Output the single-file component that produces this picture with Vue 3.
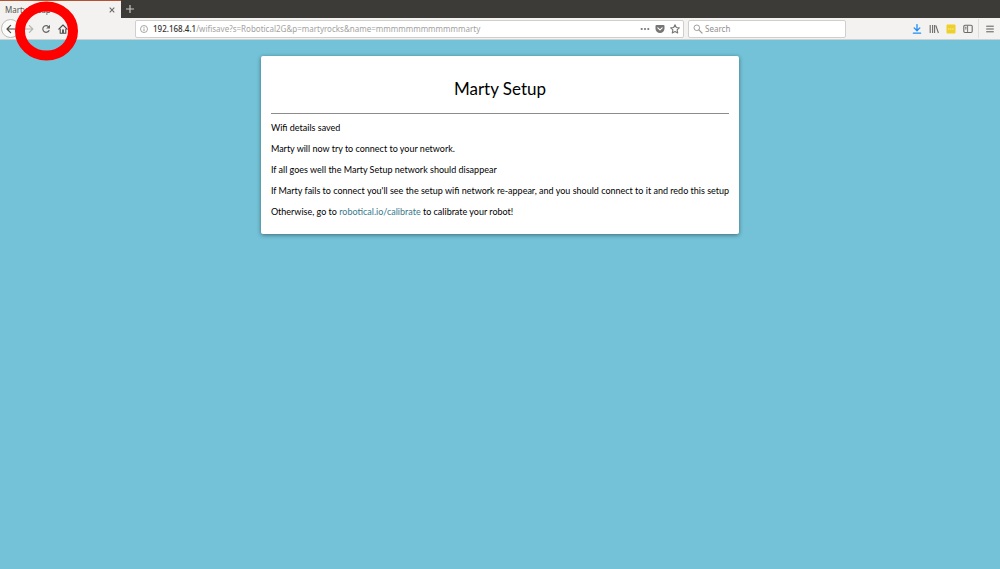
<script setup>
import { ref } from 'vue'

const query = ref('')
const paragraphs = [
  'Wifi details saved',
  'Marty will now try to connect to your network.',
  'If all goes well the Marty Setup network should disappear',
  "If Marty fails to connect you'll see the setup wifi network re-appear, and you should connect to it and redo this setup",
]
</script>

<template>
  <div class="window">
    <header class="chrome">
      <div class="tabs">
        <div class="tab">
          <span class="tab-title">Marty Setup</span>
          <button class="tab-close" aria-label="Close tab">
            <svg width="6" height="6" viewBox="0 0 6 6"><path d="M.7.7l4.6 4.6M5.3.7L.7 5.3" stroke="#6b6966" stroke-width="1.1" /></svg>
          </button>
        </div>
        <button class="new-tab" aria-label="New tab">
          <svg width="8" height="8" viewBox="0 0 8 8"><path d="M4 0v8M0 4h8" stroke="#c9c8c4" stroke-width="1.2" /></svg>
        </button>
      </div>

      <div class="toolbar">
        <nav class="nav">
          <button class="back" aria-label="Back">
            <svg width="10" height="10" viewBox="0 0 10 10"><path d="M9.3 5H1.2M4.6 1.4L1 5l3.6 3.6" fill="none" stroke="#4c4b49" stroke-width="1.2" stroke-linecap="round" stroke-linejoin="round" /></svg>
          </button>
          <button aria-label="Forward">
            <svg width="10" height="10" viewBox="0 0 10 10"><path d="M1 5h7.6M5.4 1.6L8.8 5 5.4 8.4" fill="none" stroke="#b5b4b2" stroke-width="1.2" stroke-linecap="round" stroke-linejoin="round" /></svg>
          </button>
          <button aria-label="Reload">
            <svg width="10" height="10" viewBox="0 0 10 10"><path d="M7.4 2.6A3.3 3.3 0 1 0 8 6.6" fill="none" stroke="#666562" stroke-width="1.2" stroke-linecap="round" /><path d="M9 .8v3.8H5.2z" fill="#666562" /></svg>
          </button>
          <button aria-label="Home">
            <svg width="10" height="10" viewBox="0 0 10 10"><path d="M.8 5.2L5 1l4.2 4.2M2.2 5v4.2h5.6V5" fill="none" stroke="#4c4b49" stroke-width="1.1" stroke-linecap="round" stroke-linejoin="round" /><path d="M4.1 9V5.6h1.8V9z" fill="#4c4b49" /></svg>
          </button>
        </nav>

        <div class="address">
          <svg width="8" height="8" viewBox="0 0 8 8"><circle cx="4" cy="4" r="3.5" fill="none" stroke="#91908e" stroke-width=".8" /><path d="M4 3.5V6M4 1.9v.9" stroke="#91908e" stroke-width=".9" /></svg>
          <span class="url"><b>192.168.4.1</b>/wifisave?s=Robotical2G&amp;p=martyrocks&amp;name=mmmmmmmmmmmmarty</span>
          <button aria-label="Page actions">
            <svg width="10" height="10" viewBox="0 0 10 10" fill="#777674"><circle cx="1.7" cy="5" r="1.1" /><circle cx="5" cy="5" r="1.1" /><circle cx="8.3" cy="5" r="1.1" /></svg>
          </button>
          <button aria-label="Save to Pocket">
            <svg width="10" height="10" viewBox="0 0 10 10"><path d="M1.4 1h7.2q.9 0 .9.9v2.6a4.5 4.5 0 0 1-9 0V1.9q0-.9.9-.9z" fill="#777674" /><path d="M2.8 3.9L5 5.9l2.2-2" fill="none" stroke="#fff" stroke-width="1.1" stroke-linecap="round" stroke-linejoin="round" /></svg>
          </button>
          <button aria-label="Bookmark">
            <svg width="10" height="10" viewBox="0 0 10 10"><path d="M5 .8l1.3 2.7 3 .4-2.2 2 .6 3L5 7.5 2.3 8.9l.6-3-2.2-2 3-.4z" fill="none" stroke="#777674" stroke-width="1.1" stroke-linejoin="round" /></svg>
          </button>
        </div>

        <label class="search">
          <svg width="10" height="10" viewBox="0 0 10 10"><circle cx="3.8" cy="3.8" r="2.8" fill="none" stroke="#a09f9d" stroke-width="1" /><path d="M5.9 5.9L9 9" stroke="#a09f9d" stroke-width="1.2" stroke-linecap="round" /></svg>
          <input v-model="query" type="text" placeholder="Search" aria-label="Search" />
        </label>

        <div class="tools">
          <button aria-label="Downloads">
            <svg width="10" height="10" viewBox="0 0 10 10"><path d="M5 .6v5.8M2.2 3.9L5 6.7l2.8-2.8M1.4 9.2h7.2" fill="none" stroke="#1f8cf5" stroke-width="1.3" stroke-linecap="round" stroke-linejoin="round" /></svg>
          </button>
          <button aria-label="Library">
            <svg width="10" height="10" viewBox="0 0 10 10"><path d="M1.2 1v8M3.6 1v8M5.6 1v8M6.8 1.4L9.4 9" fill="none" stroke="#6b6a68" stroke-width="1.1" /></svg>
          </button>
          <button aria-label="Extension">
            <svg width="10" height="10" viewBox="0 0 10 10"><rect x=".5" y=".5" width="9" height="9" rx="1" fill="#edd02a" /><path d="M2 5h6" stroke="#faf0a8" stroke-width="1" stroke-dasharray="1.2 .6" /></svg>
          </button>
          <button aria-label="Sidebar">
            <svg width="10" height="10" viewBox="0 0 10 10"><rect x=".8" y="1.3" width="8.4" height="7.2" rx="1.2" fill="none" stroke="#6b6a68" stroke-width="1.1" /><path d="M4.6 1.5v7M2 3.3h1.6M2 4.9h1.6" stroke="#6b6a68" stroke-width=".9" /></svg>
          </button>
          <button class="menu" aria-label="Menu">
            <svg width="8" height="8" viewBox="0 0 8 8"><path d="M.6 1.2h6.8M.6 4h6.8M.6 6.8h6.8" stroke="#5b5a58" stroke-width="1" stroke-linecap="round" /></svg>
          </button>
        </div>
      </div>
    </header>

    <main class="page">
      <section class="card">
        <h1>Marty Setup</h1>
        <p v-for="text in paragraphs" :key="text">{{ text }}</p>
        <p>Otherwise, go to <a href="#calibrate">robotical.io/calibrate</a> to calibrate your robot!</p>
      </section>
    </main>

    <svg class="ring" width="64" height="60" viewBox="0 0 64 60" aria-hidden="true">
      <ellipse cx="31.5" cy="30" rx="26.5" ry="24.5" fill="none" stroke="#fe0000" stroke-width="10" />
    </svg>
  </div>
</template>

<style>
body {
  margin: 0;
  background: #73c2d8;
}
</style>

<style scoped>
.window {
  position: relative;
  min-height: 100vh;
  font-family: "Noto Sans", sans-serif;
  font-size: 8px;
}
button {
  display: flex;
  align-items: center;
  justify-content: center;
  flex: none;
  margin: 0;
  padding: 0;
  border: 0;
  background: none;
}
svg {
  display: block;
  flex: none;
}
.tabs {
  display: flex;
  height: 18px;
  background: #3c3b37;
}
.tab {
  display: flex;
  align-items: center;
  justify-content: space-between;
  box-sizing: border-box;
  width: 121px;
  padding: 0 6px 0 5px;
  border-top: 1px solid #b4532f;
  background: #f3f2f0;
  color: #55534f;
}
.new-tab {
  width: 18px;
}
.toolbar {
  display: flex;
  align-items: center;
  box-sizing: border-box;
  height: 22px;
  border-bottom: 1px solid #c9d3d3;
  background: #f3f2f0;
}
.nav {
  display: flex;
  align-items: center;
  gap: 7px;
  padding-left: 1px;
}
.back {
  width: 19px;
  height: 19px;
  margin-right: -3px;
  border: 1px solid #bdbcb9;
  border-radius: 50%;
  background: #fbfbfa;
}
.address,
.search {
  display: flex;
  align-items: center;
  box-sizing: border-box;
  height: 18px;
  border: 1px solid #d0cfcc;
  border-radius: 2px;
  background: #fff;
}
.address {
  flex: 1;
  gap: 5px;
  min-width: 0;
  margin-left: 67px;
  padding: 0 3px 0 4px;
}
.url {
  flex: 1;
  overflow: hidden;
  white-space: nowrap;
  color: #a3a2a0;
}
.url b {
  font-weight: 500;
  color: #33322f;
}
.search {
  gap: 2px;
  width: 158px;
  margin-left: 4px;
  padding-left: 4px;
}
.search input {
  flex: 1;
  min-width: 0;
  padding: 0;
  border: 0;
  outline: 0;
  background: none;
  font: inherit;
}
.search input::placeholder {
  color: #91908e;
  opacity: 1;
}
.tools {
  display: flex;
  align-items: center;
  gap: 7px;
  margin-left: 66px;
}
.menu {
  width: 22px;
  height: 19px;
  margin-left: -2px;
  border-left: 1px solid #deddda;
}
.page {
  display: flex;
  justify-content: center;
  padding: 16px;
}
.card {
  padding: 13px 10px 12px;
  border-radius: 2px;
  background: #fff;
  box-shadow: 0 1px 4px rgba(0, 0, 0, 0.45);
  color: #000;
  font-family: Lato, sans-serif;
  font-size: 9px;
}
.card h1 {
  margin: 0 0 3px;
  padding: 8px 0 12px;
  border-bottom: 1px solid #8c8c8c;
  font-size: 17px;
  font-weight: 400;
  line-height: 24px;
  text-align: center;
}
.card p {
  margin: 0;
  line-height: 21px;
}
.card a {
  color: #37788c;
  text-decoration: none;
}
.ring {
  position: absolute;
  top: 1px;
  left: 15px;
  pointer-events: none;
}
</style>
